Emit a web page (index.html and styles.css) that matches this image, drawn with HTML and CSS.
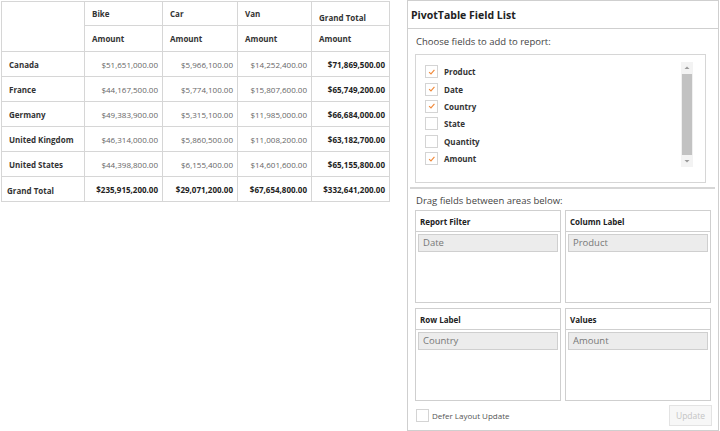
FILE: index.html
```html
<!DOCTYPE html>
<html>
<head>
<meta charset="utf-8">
<link rel="stylesheet" href="styles.css">
</head>
<body>
<div class="page">
  <div class="grid-wrap">
    <table class="pivot">
      <colgroup>
        <col class="c0"><col class="c1"><col class="c2"><col class="c3"><col class="c4">
      </colgroup>
      <tr class="h1">
        <th class="corner" rowspan="2"></th>
        <th>Bike</th><th>Car</th><th>Van</th><th class="gt-head">Grand Total</th>
      </tr>
      <tr class="h2">
        <th>Amount</th><th>Amount</th><th>Amount</th><th>Amount</th>
      </tr>
      <tr><th class="rh">Canada</th><td>$51,651,000.00</td><td>$5,966,100.00</td><td>$14,252,400.00</td><td class="gt">$71,869,500.00</td></tr>
      <tr><th class="rh">France</th><td>$44,167,500.00</td><td>$5,774,100.00</td><td>$15,807,600.00</td><td class="gt">$65,749,200.00</td></tr>
      <tr><th class="rh">Germany</th><td>$49,383,900.00</td><td>$5,315,100.00</td><td>$11,985,000.00</td><td class="gt">$66,684,000.00</td></tr>
      <tr><th class="rh">United Kingdom</th><td>$46,314,000.00</td><td>$5,860,500.00</td><td>$11,008,200.00</td><td class="gt">$63,182,700.00</td></tr>
      <tr><th class="rh">United States</th><td>$44,398,800.00</td><td>$6,155,400.00</td><td>$14,601,600.00</td><td class="gt">$65,155,800.00</td></tr>
      <tr class="total"><th class="rh gtr">Grand Total</th><td class="gt">$235,915,200.00</td><td class="gt">$29,071,200.00</td><td class="gt">$67,654,800.00</td><td class="gt">$332,641,200.00</td></tr>
    </table>
  </div>

  <div class="field-list">
    <div class="fl-title">PivotTable Field List</div>
    <div class="fl-caption">Choose fields to add to report:</div>
    <div class="fields-box">
      <ul class="fields">
        <li><span class="cb checked"><svg viewBox="0 0 12 12" width="12" height="12"><path d="M3.2 6.2 L5.2 8 L8.8 3.8" fill="none" stroke="#f08a3c" stroke-width="1.2"/></svg></span>Product</li>
        <li><span class="cb checked"><svg viewBox="0 0 12 12" width="12" height="12"><path d="M3.2 6.2 L5.2 8 L8.8 3.8" fill="none" stroke="#f08a3c" stroke-width="1.2"/></svg></span>Date</li>
        <li><span class="cb checked"><svg viewBox="0 0 12 12" width="12" height="12"><path d="M3.2 6.2 L5.2 8 L8.8 3.8" fill="none" stroke="#f08a3c" stroke-width="1.2"/></svg></span>Country</li>
        <li><span class="cb"></span>State</li>
        <li><span class="cb"></span>Quantity</li>
        <li><span class="cb checked"><svg viewBox="0 0 12 12" width="12" height="12"><path d="M3.2 6.2 L5.2 8 L8.8 3.8" fill="none" stroke="#f08a3c" stroke-width="1.2"/></svg></span>Amount</li>
      </ul>
      <div class="scrollbar">
        <div class="sb-btn"><svg viewBox="0 0 12 12" width="12" height="12"><path d="M3.5 7 L6 4.5 L8.5 7 Z" fill="#9a9a9a"/></svg></div>
        <div class="sb-thumb"></div>
        <div class="sb-btn"><svg viewBox="0 0 12 12" width="12" height="12"><path d="M3.5 5 L6 7.5 L8.5 5 Z" fill="#9a9a9a"/></svg></div>
      </div>
    </div>
    <div class="fl-sep"></div>
    <div class="fl-caption drag">Drag fields between areas below:</div>
    <div class="areas">
      <div class="area"><div class="area-head">Report Filter</div><div class="area-body"><div class="chip">Date</div></div></div>
      <div class="area"><div class="area-head">Column Label</div><div class="area-body"><div class="chip">Product</div></div></div>
      <div class="area"><div class="area-head">Row Label</div><div class="area-body"><div class="chip">Country</div></div></div>
      <div class="area"><div class="area-head">Values</div><div class="area-body"><div class="chip">Amount</div></div></div>
    </div>
    <div class="fl-footer">
      <label class="defer"><span class="cb"></span>Defer Layout Update</label>
      <button class="update" disabled>Update</button>
    </div>
  </div>
</div>
</body>
</html>
```
FILE: styles.css
```css
html, body {
  margin: 0;
  padding: 0;
  background: #fff;
}
body {
  font-family: "Open Sans", "Noto Sans", sans-serif;
  color: #333;
  width: 720px;
  height: 431px;
  overflow: hidden;
}
.page {
  display: flex;
  align-items: flex-start;
  height: 431px;
}
.grid-wrap {
  padding: 1px 0 0 1px;
  width: 406px;
  flex: none;
}
.pivot {
  border-collapse: collapse;
  table-layout: fixed;
  width: 389px;
  font-size: 8px;
}
.c0 { width: 83px; }
.c1 { width: 78px; }
.c2 { width: 75px; }
.c3 { width: 74px; }
.c4 { width: 78px; }
.pivot th, .pivot td {
  border: 1px solid #d6d6d6;
  height: 24px;
  padding: 0;
  white-space: nowrap;
  overflow: hidden;
}
.pivot th {
  font-weight: 700;
  text-align: left;
  color: #333;
  padding-left: 7px;
}
.pivot .h1 th {
  vertical-align: top;
  padding-top: 6px;
  height: 17px;
}
.pivot .h1 th.gt-head {
  padding-top: 10px;
  height: 13px;
}
.pivot .h2 th {
  height: 25px;
}
.pivot th.rh {
  padding-left: 7px;
}
.pivot th.gtr {
  padding-left: 5px;
  padding-top: 3px;
  height: 21px;
}
.pivot td {
  text-align: right;
  padding-right: 4px;
  color: #666;
  font-weight: 400;
}
.pivot td.gt {
  color: #222;
  font-weight: 700;
}

/* Field list */
.field-list {
  width: 310px;
  height: 429px;
  border: 1px solid #cfcfcf;
  display: flex;
  flex-direction: column;
  flex: none;
}
.fl-title {
  height: 27px;
  line-height: 28px;
  border-bottom: 1px solid #cfcfcf;
  padding-left: 3px;
  font-weight: 700;
  font-size: 10.5px;
  color: #222;
}
.fl-caption {
  font-size: 9.5px;
  color: #444;
  padding: 7px 0 0 8px;
  height: 18px;
  line-height: 12px;
}
.fields-box {
  margin-left: 7px;
  width: 289px;
  height: 127px;
  border: 1px solid #d6d6d6;
  display: flex;
  justify-content: space-between;
  padding: 0;
}
.fields {
  list-style: none;
  margin: 0;
  padding: 8px 0 0 9px;
}
.fields li {
  display: flex;
  align-items: center;
  height: 17.4px;
  font-size: 8px;
  font-weight: 700;
  color: #333;
}
.cb {
  display: inline-flex;
  width: 11px;
  height: 11px;
  border: 1px solid #d4d4d4;
  background: #fff;
  margin-right: 6px;
  flex: none;
}
.cb svg { margin: -0.5px 0 0 -0.5px; }
.scrollbar {
  width: 12px;
  margin: 7px 12px 0 0;
  height: 105px;
  display: flex;
  flex-direction: column;
  background: #f0f0f0;
}
.sb-btn {
  height: 12px;
  background: #f3f3f3;
  display: flex;
  justify-content: center;
}
.sb-thumb {
  flex: 1;
  background: #c2c2c2;
  margin: 0 1px;
}
.fl-sep {
  margin: 4px 3px 0 2px;
  height: 2px;
  background: #d6d6d6;
}
.fl-caption.drag {
  padding-top: 6px;
  height: 15px;
}
.areas {
  margin-left: 7px;
  display: grid;
  grid-template-columns: 146px 146px;
  grid-template-rows: 93px 93px;
  column-gap: 4px;
  row-gap: 5px;
}
.area {
  border: 1px solid #cfcfcf;
  display: flex;
  flex-direction: column;
}
.area-head {
  height: 20px;
  line-height: 21px;
  border-bottom: 1px solid #cfcfcf;
  padding-left: 4px;
  font-size: 8px;
  font-weight: 700;
  color: #222;
}
.area-body {
  padding: 2px 2px 0 2px;
}
.chip {
  height: 16px;
  line-height: 16px;
  border: 1px solid #cfcfcf;
  background: #ececec;
  color: #777;
  font-size: 9.5px;
  padding-left: 4px;
}
.fl-footer {
  display: flex;
  align-items: center;
  justify-content: space-between;
  margin: 4px 6px 0 8px;
  height: 21px;
}
.defer {
  display: flex;
  align-items: center;
  font-size: 8px;
  color: #555;
}
.defer .cb {
  margin-right: 3px;
}
.update {
  width: 43px;
  height: 21px;
  border: 1px solid #e3e3e3;
  background: #f7f7f7;
  color: #c4c4c4;
  font-family: "Open Sans", "Noto Sans", sans-serif;
  font-size: 8.5px;
  padding: 0;
}
```
